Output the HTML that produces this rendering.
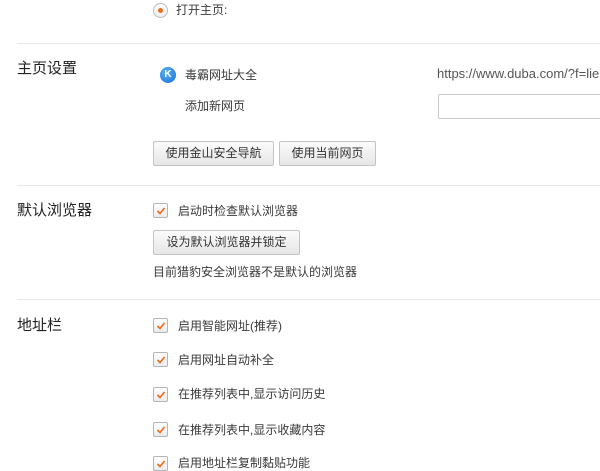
<!DOCTYPE html>
<html><head><meta charset="utf-8"><style>
body{margin:0;width:600px;height:468px;background:#fff;overflow:hidden;position:relative;font-family:"Liberation Sans","Microsoft YaHei","Noto Sans CJK SC",sans-serif;color:#3a3a3a;font-size:12px}
.a{position:absolute;white-space:nowrap;line-height:16px}
.h{font-size:15px;color:#222;line-height:18px}
.sep{position:absolute;left:17px;right:0;height:1px;background:#e8e8e8}
.btn{position:absolute;height:23px;border:1px solid #c4c4c4;border-radius:2px;background:linear-gradient(#fbfbfb,#e6e6e6);font-size:12px;line-height:23px;text-align:center;color:#333;box-sizing:content-box}
.cb{position:absolute;left:153px;width:13px;height:13px;border:1px solid #b5b5b5;border-radius:2px;background:linear-gradient(#fff,#ececec)}
.cb svg{position:absolute;left:2px;top:2px}
</style></head><body>
<div style="position:absolute;left:153px;top:3px;width:13px;height:13px;border:1px solid #bbb;border-radius:50%;background:linear-gradient(#fff,#eee)"><div style="position:absolute;left:4px;top:4px;width:5px;height:5px;border-radius:50%;background:#f06a1a"></div></div>
<div class="a" style="left:176px;top:2px">打开主页:</div>
<div class="sep" style="top:43px"></div>

<div class="a h" style="left:17px;top:60px">主页设置</div>
<div style="position:absolute;left:160px;top:67px;width:16px;height:16px;border-radius:50%;background:radial-gradient(circle at 40% 35%,#5ab0f5,#1670d0);color:#fff;font-size:10px;font-weight:bold;line-height:16px;text-align:center;font-family:'Liberation Sans',sans-serif">K</div>
<div class="a" style="left:185px;top:67px">毒霸网址大全</div>
<div class="a" style="left:185px;top:98px">添加新网页</div>
<div class="a" style="left:437px;top:66px;color:#555;font-size:13px">https://www.duba.com/?f=lie</div>
<div style="position:absolute;left:438px;top:94px;width:180px;height:23px;border:1px solid #c8c8c8;border-radius:2px"></div>
<div class="btn" style="left:153px;top:141px;width:119px">使用金山安全导航</div>
<div class="btn" style="left:279px;top:141px;width:95px">使用当前网页</div>
<div class="sep" style="top:185px"></div>

<div class="a h" style="left:17px;top:202px">默认浏览器</div>
<div class="cb" style="top:203px"><svg width="10" height="10"><path d="M1.5 5 L4 7.5 L8.5 2" stroke="#f06a1a" stroke-width="1.6" fill="none"/></svg></div>
<div class="a" style="left:178px;top:203px">启动时检查默认浏览器</div>
<div class="btn" style="left:153px;top:230px;width:145px">设为默认浏览器并锁定</div>
<div class="a" style="left:153px;top:264px">目前猎豹安全浏览器不是默认的浏览器</div>
<div class="sep" style="top:299px"></div>

<div class="a h" style="left:17px;top:317px">地址栏</div>
<div class="cb" style="top:318px"><svg width="10" height="10"><path d="M1.5 5 L4 7.5 L8.5 2" stroke="#f06a1a" stroke-width="1.6" fill="none"/></svg></div>
<div class="a" style="left:178px;top:318px">启用智能网址(推荐)</div>
<div class="cb" style="top:352px"><svg width="10" height="10"><path d="M1.5 5 L4 7.5 L8.5 2" stroke="#f06a1a" stroke-width="1.6" fill="none"/></svg></div>
<div class="a" style="left:178px;top:352px">启用网址自动补全</div>
<div class="cb" style="top:387px"><svg width="10" height="10"><path d="M1.5 5 L4 7.5 L8.5 2" stroke="#f06a1a" stroke-width="1.6" fill="none"/></svg></div>
<div class="a" style="left:178px;top:386px">在推荐列表中,显示访问历史</div>
<div class="cb" style="top:422px"><svg width="10" height="10"><path d="M1.5 5 L4 7.5 L8.5 2" stroke="#f06a1a" stroke-width="1.6" fill="none"/></svg></div>
<div class="a" style="left:178px;top:422px">在推荐列表中,显示收藏内容</div>
<div class="cb" style="top:456px"><svg width="10" height="10"><path d="M1.5 5 L4 7.5 L8.5 2" stroke="#f06a1a" stroke-width="1.6" fill="none"/></svg></div>
<div class="a" style="left:178px;top:455px">启用地址栏复制黏贴功能</div>
</body></html>
